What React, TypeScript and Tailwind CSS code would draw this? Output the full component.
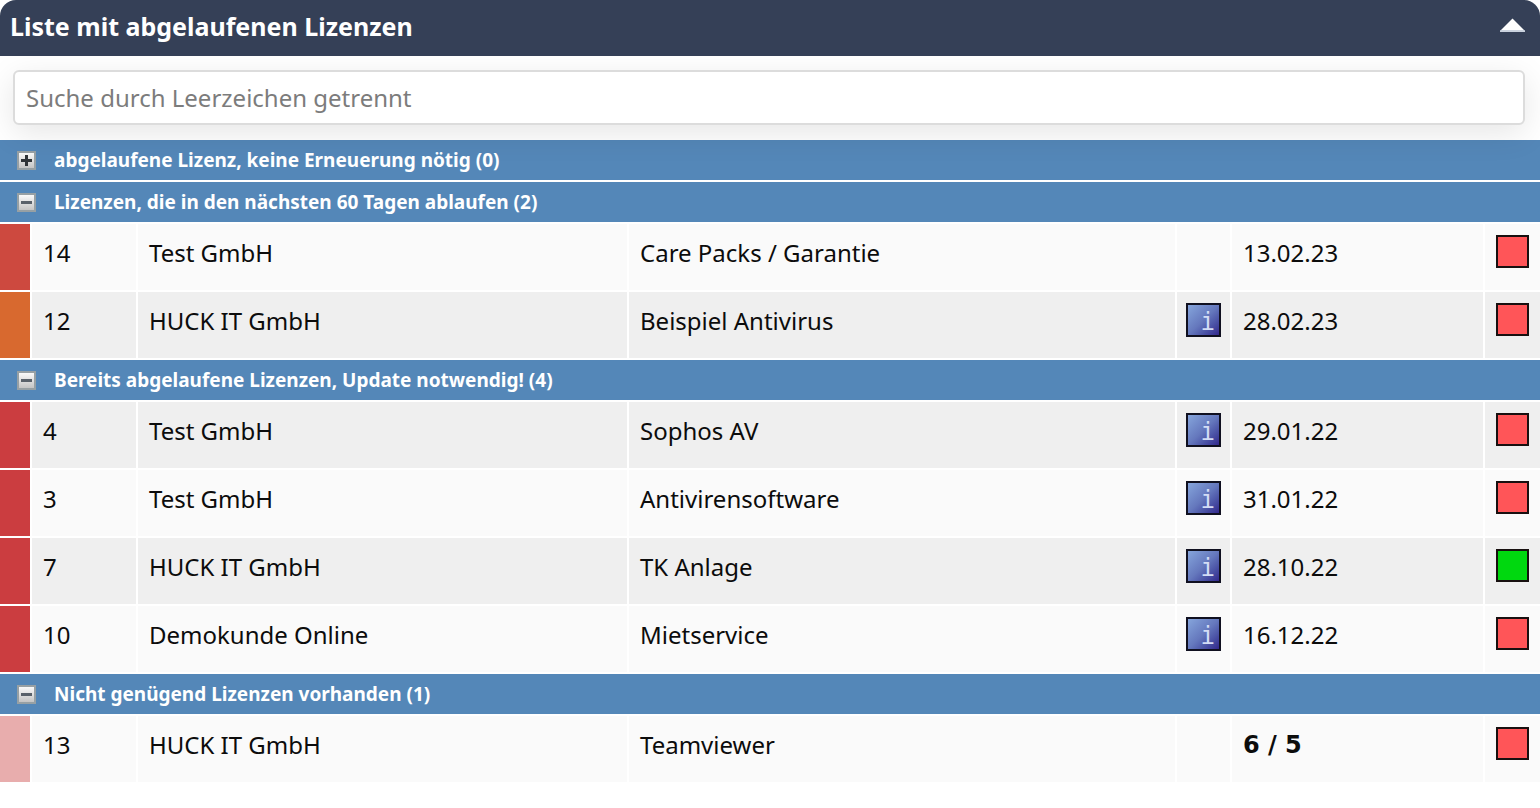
import React, { useState } from 'react';
import { clsx } from 'clsx';

type Severity = 'red' | 'orange' | 'crimson' | 'pink';

interface License {
  id: number;
  customer: string;
  product: string;
  hasInfo?: boolean;
  value: string;
  bold?: boolean;
  severity: Severity;
  ok?: boolean;
  shaded?: boolean;
}

interface LicenseGroup {
  key: string;
  title: string;
  open: boolean;
  items: License[];
}

const GROUPS: LicenseGroup[] = [
  { key: 'expired', title: 'abgelaufene Lizenz, keine Erneuerung nötig', open: false, items: [] },
  {
    key: 'upcoming',
    title: 'Lizenzen, die in den nächsten 60 Tagen ablaufen',
    open: true,
    items: [
      { id: 14, customer: 'Test GmbH', product: 'Care Packs / Garantie', value: '13.02.23', severity: 'red' },
      { id: 12, customer: 'HUCK IT GmbH', product: 'Beispiel Antivirus', hasInfo: true, value: '28.02.23', severity: 'orange', shaded: true },
    ],
  },
  {
    key: 'update',
    title: 'Bereits abgelaufene Lizenzen, Update notwendig!',
    open: true,
    items: [
      { id: 4, customer: 'Test GmbH', product: 'Sophos AV', hasInfo: true, value: '29.01.22', severity: 'crimson', shaded: true },
      { id: 3, customer: 'Test GmbH', product: 'Antivirensoftware', hasInfo: true, value: '31.01.22', severity: 'crimson' },
      { id: 7, customer: 'HUCK IT GmbH', product: 'TK Anlage', hasInfo: true, value: '28.10.22', severity: 'crimson', ok: true, shaded: true },
      { id: 10, customer: 'Demokunde Online', product: 'Mietservice', hasInfo: true, value: '16.12.22', severity: 'crimson' },
    ],
  },
  {
    key: 'insufficient',
    title: 'Nicht genügend Lizenzen vorhanden',
    open: true,
    items: [
      { id: 13, customer: 'HUCK IT GmbH', product: 'Teamviewer', value: '6 / 5', bold: true, severity: 'pink' },
    ],
  },
];

const SEVERITY_BG: Record<Severity, string> = {
  red: 'bg-[#cd493f]',
  orange: 'bg-[#d8692f]',
  crimson: 'bg-[#cb3d40]',
  pink: 'bg-[#e8adad]',
};

function ToggleIcon({ open }: { open: boolean }) {
  return (
    <svg width="19" height="19" viewBox="0 0 19 19" aria-hidden="true">
      <defs>
        <linearGradient id="toggleFill" x1="0" y1="0" x2="0" y2="1">
          <stop offset="0" stopColor="#fafafa" />
          <stop offset="1" stopColor="#c4c4c4" />
        </linearGradient>
      </defs>
      <rect width="19" height="19" fill="#97a0a4" />
      <rect x="2" y="2" width="15" height="15" fill="url(#toggleFill)" />
      <rect x="4" y="8" width="11" height="3" fill={open ? '#59616a' : '#303438'} />
      {!open && <rect x="8" y="4" width="3" height="11" fill="#303438" />}
    </svg>
  );
}

function LicenseRow({ item }: { item: License }) {
  const cell = clsx('border-b-2 border-l-2 border-white pt-[11px] align-top', item.shaded ? 'bg-[#efefef]' : 'bg-[#fafafa]');

  return (
    <tr className="h-[68px]">
      <td className={clsx('border-b-2 border-white', SEVERITY_BG[item.severity])} />
      <td className={clsx(cell, 'px-[11px]')}>{item.id}</td>
      <td className={clsx(cell, 'px-[11px]')}>{item.customer}</td>
      <td className={clsx(cell, 'px-[11px]')}>{item.product}</td>
      <td className={clsx(cell, 'px-[9px]')}>
        {item.hasInfo && (
          <button
            type="button"
            title={item.product}
            className="flex h-[34px] w-[35px] items-end justify-end border-2 border-[#101020] bg-gradient-to-br from-[#86a5dc] via-[#6578bd] to-[#33278c] pr-1 font-['DejaVu_Sans_Mono',monospace] text-2xl leading-[26px] text-[#d3dcf5]"
          >
            i
          </button>
        )}
      </td>
      <td className={clsx(cell, 'px-[11px]', item.bold && "font-['DejaVu_Sans',sans-serif] font-bold")}>{item.value}</td>
      <td className={clsx(cell, 'px-[11px]')}>
        <div className={clsx('h-[33px] w-[33px] border-2 border-[#181010]', item.ok ? 'bg-[#00d80f]' : 'bg-[#ff5558]')} />
      </td>
    </tr>
  );
}

export default function App() {
  const [visible, setVisible] = useState(true);
  const [query, setQuery] = useState('');
  const [open, setOpen] = useState<Record<string, boolean>>(
    Object.fromEntries(GROUPS.map((g) => [g.key, g.open])),
  );

  // every word of the query has to match somewhere in the row
  const words = query.toLowerCase().split(' ').filter(Boolean);
  const matches = (item: License) => {
    const text = `${item.id} ${item.customer} ${item.product} ${item.value}`.toLowerCase();
    return words.every((w) => text.includes(w));
  };

  return (
    <div className="w-full bg-white font-['Noto_Sans',sans-serif] text-2xl leading-[36px] text-[#0c0c0c]">
      <header className="flex h-14 items-center justify-between rounded-t-2xl bg-[#354057] pr-[15px] pl-[10px]">
        <h1 className="pb-1 text-[25px] font-bold text-white">Liste mit abgelaufenen Lizenzen</h1>
        <button type="button" aria-label="Liste ein- oder ausklappen" onClick={() => setVisible(!visible)}>
          <svg width="25" height="14" viewBox="0 0 25 14" className="mb-[6px]" aria-hidden="true">
            <path d="M12.5 0.5 L25 13 V14 H0 V13 Z" fill="#fff" />
            <path d="M0 13 H25" stroke="#b9c3d3" strokeWidth="1.5" />
          </svg>
        </button>
      </header>

      {visible && (
        <>
          <div className="relative pt-[14px] pr-[15px] pb-[15px] pl-[13px]">
            <input
              type="text"
              aria-label="Suche"
              value={query}
              onChange={(e) => setQuery(e.target.value)}
              placeholder="Suche durch Leerzeichen getrennt"
              className="block h-[55px] w-full rounded-md border-2 border-[#dcdcdc] bg-white px-[11px] shadow-[0_8px_32px_rgba(0,0,0,0.1)] outline-none placeholder:text-[#7c7c7c]"
            />
          </div>

          <table className="w-full table-fixed border-separate border-spacing-0">
            <colgroup>
              <col className="w-[30px]" />
              <col className="w-[106px]" />
              <col className="w-[491px]" />
              <col />
              <col className="w-[55px]" />
              <col className="w-[253px]" />
              <col className="w-[57px]" />
            </colgroup>
            {GROUPS.map((group) => (
              <tbody key={group.key}>
                <tr className="h-[42px]">
                  <th colSpan={7} scope="colgroup" className="border-b-2 border-white bg-[#5487b8] p-0 text-left">
                    <button
                      type="button"
                      aria-expanded={open[group.key]}
                      onClick={() => setOpen({ ...open, [group.key]: !open[group.key] })}
                      className="flex h-[40px] w-full items-center gap-[18px] px-[17px] text-[19px] font-bold text-white"
                    >
                      <ToggleIcon open={open[group.key]} />
                      <span>
                        {group.title} ({group.items.length})
                      </span>
                    </button>
                  </th>
                </tr>
                {open[group.key] && group.items.filter(matches).map((item) => <LicenseRow key={item.id} item={item} />)}
              </tbody>
            ))}
          </table>
        </>
      )}
    </div>
  );
}
